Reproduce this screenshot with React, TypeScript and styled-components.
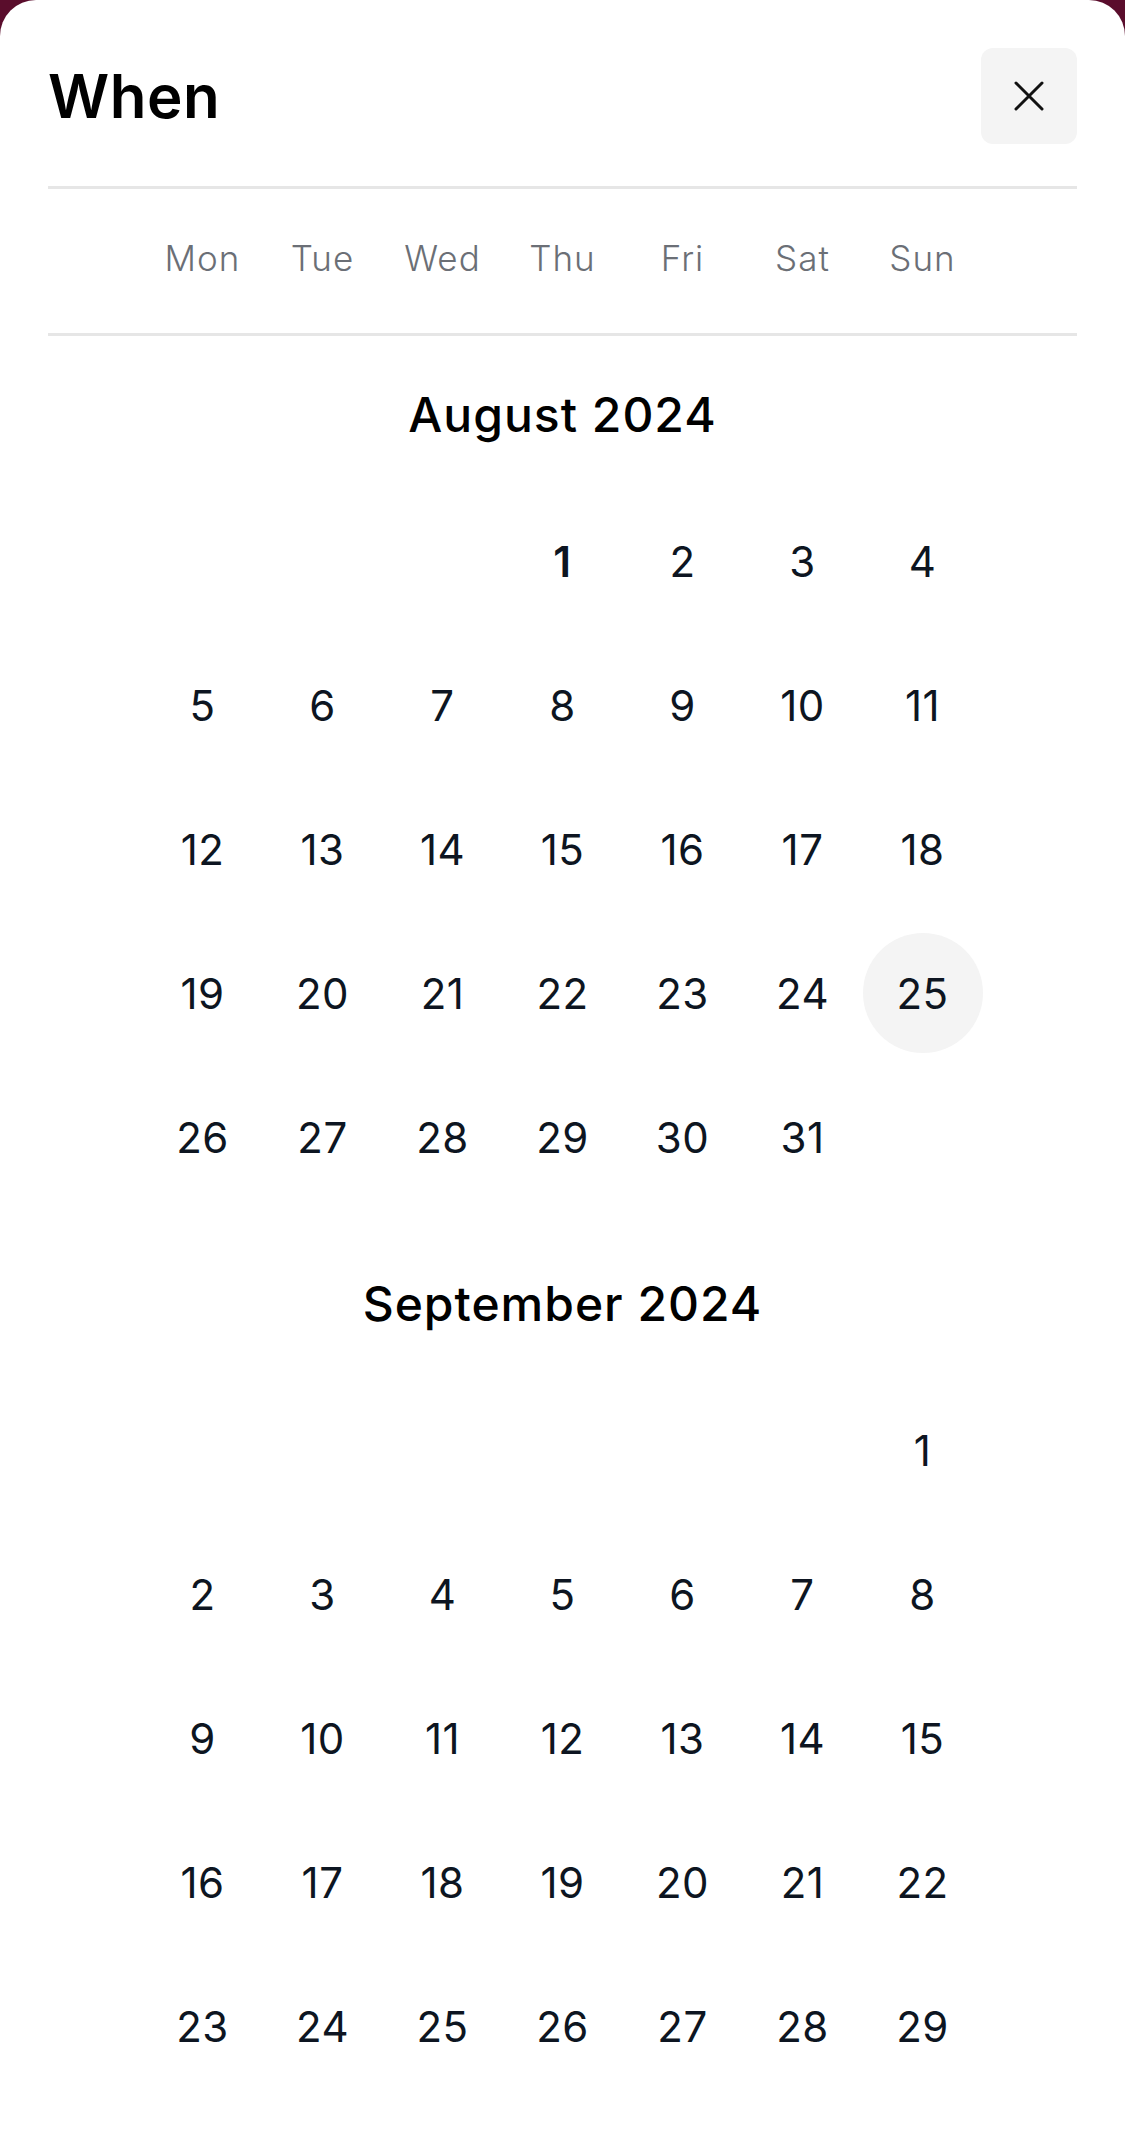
import React from "react";
import styled, { createGlobalStyle } from "styled-components";

const GlobalStyle = createGlobalStyle`
  html, body {
    margin: 0;
    padding: 0;
    background: #5a0d2c;
  }
  body {
    font-family: Inter, "Noto Sans", "Liberation Sans", sans-serif;
    -webkit-font-smoothing: antialiased;
  }
  * { box-sizing: border-box; }
`;

const Sheet = styled.div`
  background: #ffffff;
  border-radius: 36px 36px 0 0;
  height: 100vh;
  overflow-y: auto;
  padding: 48px 48px 0 48px;
`;

const Header = styled.header`
  display: flex;
  align-items: center;
  justify-content: space-between;
  height: 96px;
  margin-bottom: 42px;
`;

const Title = styled.h1`
  margin: 0;
  font-size: 60px;
  font-weight: 600;
  color: #000000;
  letter-spacing: 0.5px;
  line-height: 1;
`;

const CloseButton = styled.button`
  width: 96px;
  height: 96px;
  border: none;
  border-radius: 12px;
  background: #f4f4f4;
  display: flex;
  align-items: center;
  justify-content: center;
  padding: 0;
  cursor: pointer;
`;

const Divider = styled.hr`
  margin: 0;
  border: none;
  height: 3px;
  background: #e6e6e6;
`;

const WeekGrid = styled.div`
  display: grid;
  grid-template-columns: repeat(7, 120px);
  justify-content: center;
  height: 144px;
  align-items: center;
  padding-bottom: 6px;
`;

const WeekdayLabel = styled.span`
  text-align: center;
  font-size: 35px;
  font-weight: 300;
  color: #6b6f76;
  letter-spacing: 1px;
`;

const MonthSection = styled.section`
  padding: 43px 0 16px 0;
`;

const MonthTitle = styled.h2`
  margin: 0 0 38px 0;
  height: 72px;
  line-height: 72px;
  text-align: center;
  font-size: 48px;
  font-weight: 500;
  color: #000000;
  letter-spacing: 1px;
`;

const DayGrid = styled.div`
  display: grid;
  grid-template-columns: repeat(7, 120px);
  grid-auto-rows: 144px;
  justify-content: center;
  align-items: center;
  justify-items: center;
`;

const DayCell = styled.div<{ $selected?: boolean; $today?: boolean }>`
  width: 120px;
  height: 120px;
  border-radius: 50%;
  display: flex;
  align-items: center;
  justify-content: center;
  font-size: 42px;
  font-weight: ${(p) => (p.$today ? 600 : 400)};
  color: #0d1521;
  background: ${(p) => (p.$selected ? "#f4f4f4" : "transparent")};
  letter-spacing: 0.5px;
`;

const EmptyCell = styled.div`
  width: 120px;
  height: 120px;
`;

type MonthData = {
  name: string;
  offset: number;
  days: number;
  selected?: number;
  today?: number;
};

const months: MonthData[] = [
  { name: "August 2024", offset: 3, days: 31, selected: 25, today: 1 },
  { name: "September 2024", offset: 6, days: 30 },
];

const weekdays = ["Mon", "Tue", "Wed", "Thu", "Fri", "Sat", "Sun"];

function Month({ data }: { data: MonthData }) {
  const cells: React.ReactNode[] = [];
  for (let i = 0; i < data.offset; i++) {
    cells.push(<EmptyCell key={`e${i}`} />);
  }
  for (let d = 1; d <= data.days; d++) {
    cells.push(
      <DayCell key={d} $selected={d === data.selected} $today={d === data.today}>
        {d}
      </DayCell>
    );
  }
  return (
    <MonthSection>
      <MonthTitle>{data.name}</MonthTitle>
      <DayGrid>{cells}</DayGrid>
    </MonthSection>
  );
}

function CloseIcon() {
  return (
    <svg width="30" height="30" viewBox="0 0 30 30" fill="none">
      <path
        d="M2 2 L28 28 M28 2 L2 28"
        stroke="#111111"
        strokeWidth="3"
        strokeLinecap="round"
      />
    </svg>
  );
}

export default function App() {
  return (
    <>
      <GlobalStyle />
      <Sheet>
        <Header>
          <Title>When</Title>
          <CloseButton aria-label="Close">
            <CloseIcon />
          </CloseButton>
        </Header>
        <Divider />
        <WeekGrid>
          {weekdays.map((w) => (
            <WeekdayLabel key={w}>{w}</WeekdayLabel>
          ))}
        </WeekGrid>
        <Divider />
        {months.map((m) => (
          <Month key={m.name} data={m} />
        ))}
      </Sheet>
    </>
  );
}
